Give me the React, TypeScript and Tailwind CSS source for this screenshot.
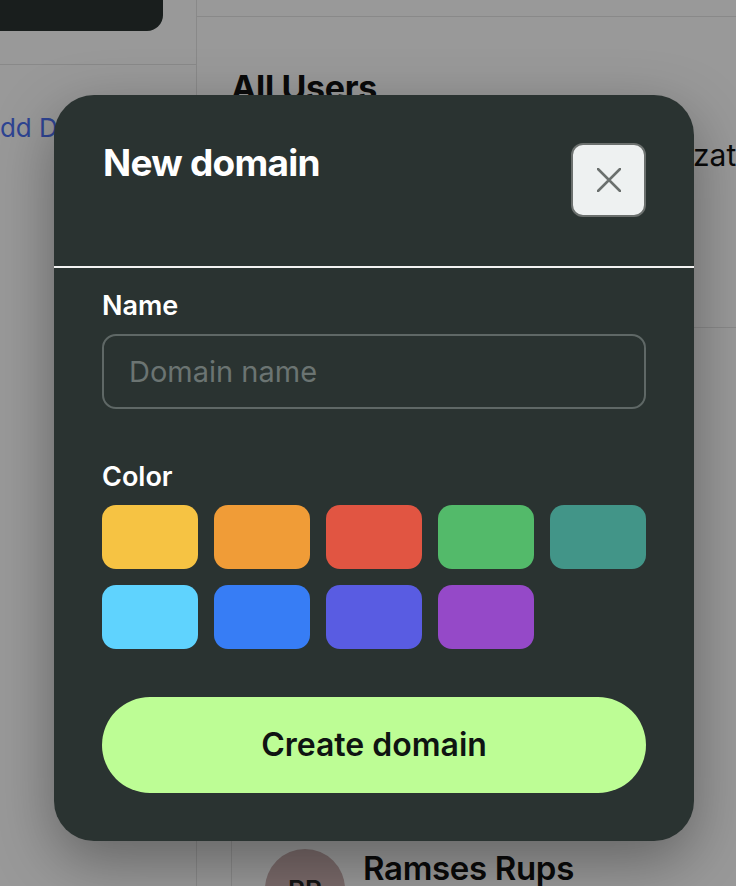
import { useState } from "react";

const swatches = [
  "#f6c343",
  "#f09c37",
  "#e15542",
  "#53ba6a",
  "#429588",
  "#5fd3fe",
  "#377df5",
  "#595ce2",
  "#9549c8",
];

const CloseIcon = () => (
  <svg width="24" height="24" viewBox="0 0 24 24" fill="none">
    <path
      d="M1 1L23 23M23 1L1 23"
      stroke="#6b706e"
      strokeWidth="2.5"
      strokeLinecap="round"
    />
  </svg>
);

// page behind the dialog
const UsersPage = () => {
  return (
    <div className="flex h-full bg-white">
      <aside className="w-[197px] shrink-0 border-r border-[#e4e4e4] overflow-hidden">
        <div className="h-[65px] border-b border-[#e4e4e4]">
          <div className="w-[163px] h-[31px] bg-[#2a3331] rounded-br-[16px]" />
        </div>
        <div className="mt-[48px] -ml-[18px] text-[26px] leading-[30px] text-[#4e72f5] whitespace-nowrap">
          Add Domain
        </div>
      </aside>

      <main className="flex-1 min-w-0 overflow-hidden">
        <div className="h-[17px] border-b border-[#e4e4e4]" />
        <div className="pl-[34px]">
          <h2 className="mt-[52px] text-[34px] leading-[38px] font-bold tracking-[-0.01em] text-[#111]">
            All Users
          </h2>
          <div className="mt-[30px] flex text-[30px] leading-[36px] text-[#111] whitespace-nowrap">
            <span className="w-[368px] shrink-0">Name</span>
            <span>Organization</span>
          </div>
          <div className="mt-[154px] border-l border-t border-[#e4e4e4] h-[600px] pl-[33px] pt-[521px]">
            <div className="flex items-start gap-[18px]">
              <div className="w-[80px] h-[80px] rounded-full bg-[#cbb1b1] flex items-center justify-center text-[26px] font-semibold text-[#222]">
                RR
              </div>
              <div className="pt-[1px] text-[33px] leading-[36px] font-semibold tracking-[-0.01em] text-[#111] whitespace-nowrap">
                Ramses Rups
              </div>
            </div>
          </div>
        </div>
      </main>
    </div>
  );
};

export default function App() {
  const [selected, setSelected] = useState<string | null>(null);
  const [name, setName] = useState("");

  return (
    <div
      className="relative w-[736px] h-[886px] overflow-hidden"
      style={{ fontFamily: "Inter, 'Noto Sans', sans-serif" }}
    >
      <UsersPage />

      <div className="absolute inset-0 bg-black/40 pt-[95px] pl-[54px]">
        <div className="w-[640px] rounded-[40px] bg-[#2a3331] shadow-[0_20px_60px_rgba(0,0,0,0.35)] overflow-hidden">
          <div className="flex items-start justify-between pt-[48px] pb-[49px] pl-[49px] pr-[48px] border-b-2 border-[#f2f2f2]">
            <h1 className="mt-[1px] text-[37px] leading-none font-bold tracking-[-0.02em] text-white">
              New domain
            </h1>
            <button className="w-[75px] h-[74px] rounded-[12px] bg-[#eef1f1] border-2 border-[#6b706e] flex items-center justify-center">
              <CloseIcon />
            </button>
          </div>

          <div className="px-[48px] pt-[22px] pb-[48px]">
            <label className="block text-[27px] leading-[32px] font-semibold text-white">
              Name
            </label>
            <input
              value={name}
              onChange={(e) => setName(e.target.value)}
              placeholder="Domain name"
              className="mt-[12px] w-full h-[75px] rounded-[14px] border-2 border-[#5f6866] bg-transparent px-[25px] text-[29px] text-white placeholder:text-[#6b7472] outline-none"
            />

            <label className="block mt-[52px] text-[27px] leading-[32px] font-semibold text-white">
              Color
            </label>
            <div className="mt-[12px] grid grid-cols-5 gap-[16px]">
              {swatches.map((c) => (
                <button
                  key={c}
                  onClick={() => setSelected(c)}
                  className={
                    "h-[64px] rounded-[14px] " +
                    (selected === c ? "ring-2 ring-white" : "")
                  }
                  style={{ backgroundColor: c }}
                />
              ))}
            </div>

            <button className="mt-[48px] w-full h-[96px] rounded-full bg-[#bdfd95] text-[32px] font-semibold text-[#0f1412]">
              Create domain
            </button>
          </div>
        </div>
      </div>
    </div>
  );
}
